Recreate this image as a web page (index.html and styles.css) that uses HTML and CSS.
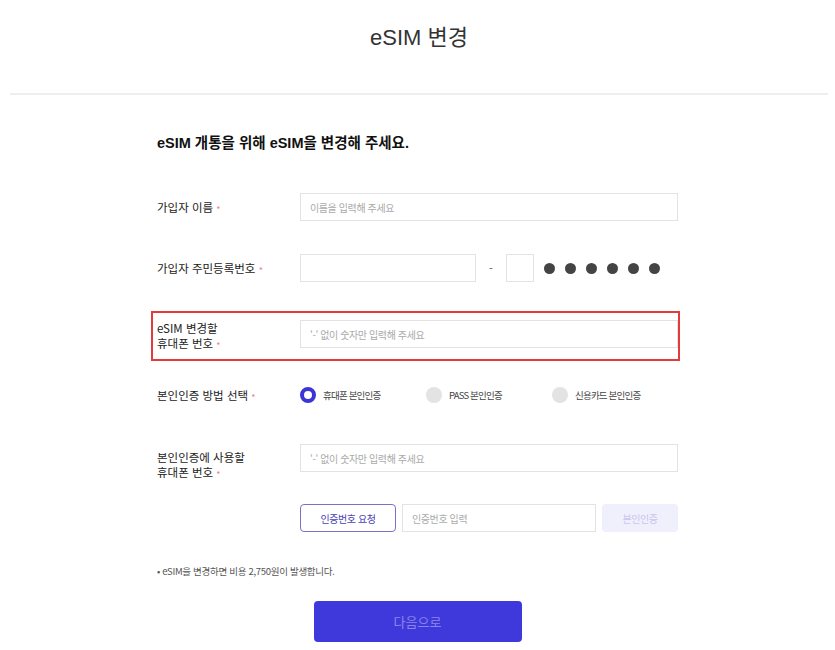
FILE: index.html
```html
<!DOCTYPE html>
<html lang="ko">
<head>
  <meta charset="UTF-8">
  <meta name="viewport" content="width=device-width, initial-scale=1.0">
  <title>eSIM 변경</title>
  <link rel="stylesheet" href="styles.css">
</head>
<body>

  <div class="page-header">
    <h1>eSIM 변경</h1>
  </div>

  <div class="content">
    <h2 class="lead">eSIM 개통을 위해 eSIM을 변경해 주세요.</h2>

    <div class="form-row row-name">
      <label class="label">가입자 이름 <span class="req">*</span></label>
      <input class="input" type="text" placeholder="이름을 입력해 주세요">
    </div>

    <div class="form-row row-jumin">
      <label class="label">가입자 주민등록번호 <span class="req">*</span></label>
      <div class="jumin">
        <input class="input input-front" type="text">
        <span class="dash">-</span>
        <input class="input input-back" type="text">
        <span class="dots">
          <i></i><i></i><i></i><i></i><i></i><i></i>
        </span>
      </div>
    </div>

    <div class="form-row row-esim">
      <label class="label">eSIM 변경할<br>휴대폰 번호 <span class="req">*</span></label>
      <input class="input" type="text" placeholder="'-' 없이 숫자만 입력해 주세요">
    </div>

    <div class="form-row row-method">
      <label class="label">본인인증 방법 선택 <span class="req">*</span></label>
      <div class="radios">
        <label class="radio checked"><span class="circle"></span>휴대폰 본인인증</label>
        <label class="radio"><span class="circle"></span>PASS 본인인증</label>
        <label class="radio"><span class="circle"></span>신용카드 본인인증</label>
      </div>
    </div>

    <div class="form-row row-phone">
      <label class="label">본인인증에 사용할<br>휴대폰 번호 <span class="req">*</span></label>
      <input class="input" type="text" placeholder="'-' 없이 숫자만 입력해 주세요">
    </div>

    <div class="form-row row-verify">
      <span></span>
      <div class="verify">
        <button class="btn-request">인증번호 요청</button>
        <input class="input input-code" type="text" placeholder="인증번호 입력">
        <button class="btn-verify">본인인증</button>
      </div>
    </div>

    <p class="note">• eSIM을 변경하면 비용 2,750원이 발생합니다.</p>

    <button class="btn-next">다음으로</button>
  </div>

</body>
</html>
```

FILE: styles.css
```css
body {
  background-color: white;
  color: #222;
  font-family: "Noto Sans CJK KR", "Noto Sans", sans-serif;
  margin: 0;
  padding: 0;
}

.page-header {
  height: 93px;
  margin: 0 7px 0 10px;
  border-bottom: 2px solid #eeeeee;
  text-align: center;
}

.page-header h1 {
  margin: 0;
  padding-top: 23px;
  font-family: "Liberation Sans", "Noto Sans CJK KR", sans-serif;
  font-size: 22px;
  font-weight: normal;
  line-height: 30px;
  color: #333;
}

.content {
  width: 521px;
  margin: 0 auto;
  display: flex;
  flex-direction: column;
}

.lead {
  margin: 38px 0 0;
  font-family: "Liberation Sans", "Noto Sans CJK KR", sans-serif;
  font-size: 14.5px;
  font-weight: bold;
  line-height: 20px;
  color: #111;
}

.form-row {
  display: grid;
  grid-template-columns: 143px 378px;
  align-items: center;
}

.label {
  font-size: 11.5px;
  line-height: 15px;
  color: #222;
}

.req {
  color: #ef7d8c;
  font-size: 9px;
  line-height: 1;
  vertical-align: -1px;
}

.input {
  box-sizing: border-box;
  height: 28px;
  width: 100%;
  margin: 0;
  padding: 0 9px;
  border: 1px solid #e3e3e3;
  border-radius: 0;
  font-family: inherit;
  font-size: 10px;
  letter-spacing: -0.4px;
  color: #333;
  outline: none;
}

.input::placeholder {
  color: #aaa;
}

.row-name {
  margin-top: 40px;
}

.row-jumin {
  margin-top: 33px;
}

.jumin {
  display: flex;
  align-items: center;
}

.input-front {
  width: 176px;
}

.dash {
  width: 30px;
  text-align: center;
  font-size: 11px;
  color: #555;
}

.input-back {
  width: 28px;
  padding: 0;
}

.dots {
  display: flex;
  gap: 10px;
  margin-left: 10px;
}

.dots i {
  width: 11px;
  height: 11px;
  border-radius: 50%;
  background-color: #444;
}

.row-esim {
  box-sizing: border-box;
  height: 50px;
  margin: 29px -2px 0 -6px;
  padding-left: 4px;
  border: 2px solid #e23b3b;
}

.row-esim .input {
  align-self: start;
  margin-top: 7px;
}

.row-method {
  margin-top: 25px;
  height: 18px;
}

.radios {
  display: flex;
}

.radio {
  width: 127px;
  display: flex;
  align-items: center;
  gap: 7px;
  font-size: 9.5px;
  letter-spacing: -0.8px;
  color: #444;
}

.circle {
  box-sizing: border-box;
  width: 16px;
  height: 16px;
  border-radius: 50%;
  background-color: #e3e3e3;
}

.radio.checked .circle {
  background-color: white;
  border: 4px solid #3b34d6;
}

.row-phone {
  margin-top: 40px;
  height: 37px;
  align-items: start;
}

.row-phone .label {
  padding-top: 6px;
}

.row-verify {
  margin-top: 23px;
}

.verify {
  display: flex;
  gap: 6px;
}

.btn-request,
.btn-verify {
  box-sizing: border-box;
  height: 28px;
  margin: 0;
  font-family: inherit;
  font-size: 10px;
  letter-spacing: -0.4px;
  border-radius: 4px;
}

.btn-request {
  width: 96px;
  background-color: white;
  border: 1px solid #7b71c9;
  color: #4a3fb3;
}

.input-code {
  width: 194px;
}

.btn-verify {
  width: 76px;
  background-color: #f0effc;
  border: none;
  color: #c8c5ef;
}

.note {
  margin: 33px 0 0;
  font-size: 9.5px;
  letter-spacing: -0.3px;
  line-height: 12px;
  color: #555;
}

.btn-next {
  align-self: center;
  width: 208px;
  height: 41px;
  margin-top: 24px;
  background-color: #3f39db;
  border: none;
  border-radius: 4px;
  font-family: inherit;
  font-size: 13px;
  color: #8985ec;
}
```
